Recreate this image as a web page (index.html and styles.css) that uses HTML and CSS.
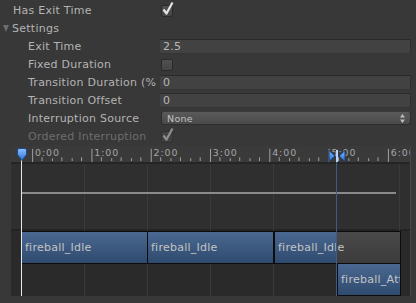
FILE: index.html
```html
<!DOCTYPE html>
<html lang="en">
<head>
  <meta charset="UTF-8">
  <title>Transition Settings</title>
  <link rel="stylesheet" href="styles.css">
</head>
<body>

  <div class="inspector">
    <div class="row">
      <span class="label">Has Exit Time</span>
      <span class="checkbox">
        <svg class="check" width="14" height="16" viewBox="0 0 14 16"><path d="M2.5 8.5 L5.5 12.5 L11.5 1.5" fill="none" stroke="#e4e4e4" stroke-width="2.2" stroke-linejoin="round"/></svg>
      </span>
    </div>
    <div class="row">
      <span class="label foldout"><span class="arrow"></span>Settings</span>
    </div>
    <div class="row">
      <span class="label indent">Exit Time</span>
      <span class="field">2.5</span>
    </div>
    <div class="row">
      <span class="label indent">Fixed Duration</span>
      <span class="checkbox"></span>
    </div>
    <div class="row">
      <span class="label indent">Transition Duration (%)</span>
      <span class="field">0</span>
    </div>
    <div class="row">
      <span class="label indent">Transition Offset</span>
      <span class="field">0</span>
    </div>
    <div class="row">
      <span class="label indent">Interruption Source</span>
      <span class="dropdown">None
        <svg class="updown" width="7" height="11" viewBox="0 0 7 11"><path d="M3.5 1 L6 4.5 H1 Z M3.5 10 L6 6.5 H1 Z" fill="#bdbdbd"/></svg>
      </span>
    </div>
    <div class="row disabled">
      <span class="label indent">Ordered Interruption</span>
      <span class="checkbox">
        <svg class="check" width="14" height="16" viewBox="0 0 14 16"><path d="M2.5 8.5 L5.5 12.5 L11.5 1.5" fill="none" stroke="#e4e4e4" stroke-width="2.2" stroke-linejoin="round"/></svg>
      </span>
    </div>
  </div>

  <div class="timeline">
    <svg class="ruler" width="400" height="17" viewBox="0 0 400 17">
      <g stroke="#a8a8a8" stroke-width="1">
        <path d="M10.5 3V17 M73.5 3V17 M136.5 3V17 M199.5 3V17 M262.5 3V17 M325.5 3V17 M388.5 3V17"/>
        <path d="M20.5 12V16 M31.5 13V16 M41.5 12V16 M52.5 13V16 M62.5 12V16
                 M83.5 12V16 M94.5 13V16 M104.5 12V16 M115.5 13V16 M125.5 12V16
                 M146.5 12V16 M157.5 13V16 M167.5 12V16 M178.5 13V16 M188.5 12V16
                 M209.5 12V16 M220.5 13V16 M230.5 12V16 M241.5 13V16 M251.5 12V16
                 M272.5 12V16 M283.5 13V16 M293.5 12V16 M304.5 13V16 M314.5 12V16
                 M335.5 12V16 M346.5 13V16 M356.5 12V16 M367.5 13V16 M377.5 12V16"/>
      </g>
      <g class="ruler-text">
        <text x="13" y="11">0:00</text>
        <text x="76" y="11">1:00</text>
        <text x="139" y="11">2:00</text>
        <text x="202" y="11">3:00</text>
        <text x="265" y="11">4:00</text>
        <text x="328" y="11">5:00</text>
        <text x="391" y="11">6:00</text>
      </g>
    </svg>

    <div class="track"></div>
    <div class="curve"></div>
    <div class="transition-line"></div>

    <div class="clip" style="left: 10px; top: 85px; width: 127px;">fireball_Idle</div>
    <div class="clip" style="left: 136px; top: 85px; width: 127px;">fireball_Idle</div>
    <div class="clip split" style="left: 263px; top: 85px; width: 127px;">
      <span class="clip-blue" style="width: 62px;"></span>
      <span class="clip-name">fireball_Idle</span>
    </div>
    <div class="clip" style="left: 326px; top: 117px; width: 64px;">fireball_Attack</div>

    <div class="playhead"></div>
    <svg class="playhead-marker" width="12" height="14" viewBox="0 0 12 14">
      <defs>
        <linearGradient id="ph" x1="0" y1="0" x2="0" y2="1">
          <stop offset="0" stop-color="#8cc0ff"/>
          <stop offset="1" stop-color="#2b6fd6"/>
        </linearGradient>
      </defs>
      <path d="M1.5 2 Q1.5 0.5 3 0.5 H9 Q10.5 0.5 10.5 2 V6.5 L6 12.5 L1.5 6.5 Z" fill="url(#ph)" stroke="#1c4a8e"/>
    </svg>
    <svg class="transition-marker" width="18" height="12" viewBox="0 0 18 12">
      <defs>
        <linearGradient id="tm" x1="0" y1="0" x2="0" y2="1">
          <stop offset="0" stop-color="#7cb6ff"/>
          <stop offset="1" stop-color="#2c6fd2"/>
        </linearGradient>
      </defs>
      <path d="M1 0.5 L7 6 L1 11.5 Z" fill="url(#tm)" stroke="#173d75"/>
      <path d="M17 0.5 L11 6 L17 11.5 Z" fill="url(#tm)" stroke="#173d75"/>
      <rect x="8" y="0" width="2" height="12" fill="#b8d4ff"/>
    </svg>
  </div>

</body>
</html>
```

FILE: styles.css
```css
* {
  box-sizing: border-box;
  margin: 0;
  padding: 0;
}

body {
  width: 416px;
  height: 303px;
  overflow: hidden;
  background-color: #383838;
  color: #b4b4b4;
  font-family: "DejaVu Sans", Verdana, sans-serif;
  font-size: 11px;
  letter-spacing: 0.25px;
}

/* Inspector rows */
.inspector {
  padding-top: 1px;
}

.row {
  display: flex;
  align-items: center;
  height: 18px;
  padding-right: 5px;
}

.label {
  width: 157px;
  flex: none;
  margin-right: 3px;
  padding-left: 13px;
  white-space: nowrap;
  overflow: hidden;
}

.label.indent {
  padding-left: 28px;
}

.label.foldout {
  display: flex;
  align-items: center;
  padding-left: 3px;
}

.arrow {
  width: 0;
  height: 0;
  margin-right: 3px;
  border-left: 3.5px solid transparent;
  border-right: 3.5px solid transparent;
  border-top: 7px solid #6c6c6c;
}

.field {
  flex: 1;
  height: 15px;
  line-height: 14px;
  padding-left: 3px;
  background-color: #424242;
  border-top: 1px solid #2a2a2a;
  border-right: 1px solid #303030;
  border-bottom: 1px solid #353535;
  color: #b8b8b8;
}

.checkbox {
  position: relative;
  width: 12px;
  height: 12px;
  margin: 1px 0 0 1px;
  background: linear-gradient(#505050, #454545);
  border: 1px solid #2a2a2a;
  border-radius: 2px;
}

.check {
  position: absolute;
  left: -1px;
  top: -5px;
}

.dropdown {
  position: relative;
  flex: 1;
  height: 14px;
  margin-left: 1px;
  padding-left: 5px;
  line-height: 13px;
  font-size: 9.5px;
  letter-spacing: 0.3px;
  color: #c2c2c2;
  background: linear-gradient(#5a5a5a, #4a4a4a);
  border: 1px solid #2c2c2c;
  border-top-color: #3a3a3a;
  border-radius: 3px;
}

.updown {
  position: absolute;
  right: 4px;
  top: 1px;
}

.disabled .label {
  color: #6e6e6e;
}

.disabled .checkbox {
  opacity: 0.5;
}

/* Timeline */
.timeline {
  position: relative;
  height: 150px;
  margin: 1px 5px 0 11px;
  background-color: #2c2c2c;
  border-right: 1px solid #474747;
  overflow: hidden;
}

.ruler {
  display: block;
  background-color: #3a3a3a;
  border-bottom: 1px solid #262626;
}

.ruler-text {
  fill: #a6a6a6;
  font-family: "DejaVu Sans", sans-serif;
  font-size: 10px;
  letter-spacing: 1px;
}

.track {
  position: absolute;
  top: 17px;
  left: 0;
  right: 0;
  bottom: 0;
  border-top: 1px solid #242424;
  background:
    linear-gradient(to right, #3a3a3a 1px, transparent 1px) 10px 0 / 63px 100% repeat-x,
    linear-gradient(#2f2f2f 65px, #232323 65px, #232323 67px, #2a2a2a 67px);
}

.curve {
  position: absolute;
  top: 46px;
  left: 10px;
  width: 375px;
  height: 2px;
  background-color: #8a8a8a;
}

.transition-line {
  position: absolute;
  top: 14px;
  left: 325px;
  width: 1px;
  bottom: 0;
  background-color: #3f5a84;
  z-index: 2;
}

.clip {
  position: absolute;
  height: 33px;
  padding-left: 3px;
  line-height: 31px;
  white-space: nowrap;
  overflow: hidden;
  color: #c4c4c4;
  background: linear-gradient(#4a6891, #2f4a6e);
  border: 1px solid #0c0c0c;
}

.clip.split {
  background: linear-gradient(#4a4a4a, #3b3b3b);
}

.clip-blue {
  position: absolute;
  left: 0;
  top: 0;
  bottom: 0;
  background: linear-gradient(#4a6891, #2f4a6e);
}

.clip-name {
  position: relative;
}

.playhead {
  position: absolute;
  top: 12px;
  left: 10px;
  width: 1px;
  bottom: 0;
  background-color: #e8e8e8;
  z-index: 3;
}

.playhead-marker {
  position: absolute;
  top: 2px;
  left: 5px;
  z-index: 4;
}

.transition-marker {
  position: absolute;
  top: 4px;
  left: 317px;
  z-index: 4;
}
```
